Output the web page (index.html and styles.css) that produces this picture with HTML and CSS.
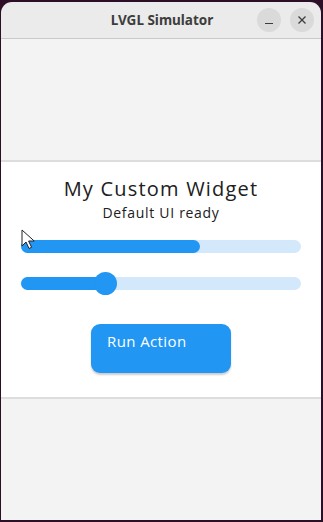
FILE: index.html
```html
<!DOCTYPE html>
<html>
<head>
<meta charset="utf-8">
<link rel="stylesheet" href="styles.css">
</head>
<body>
<div class="window">
  <div class="titlebar">
    <span class="title">LVGL Simulator</span>
    <div class="controls">
      <span class="ctl"><svg width="10" height="10" viewBox="0 0 10 10"><path d="M1 8.5h8" stroke="#3d3d3d" stroke-width="1.2"/></svg></span>
      <span class="ctl"><svg width="10" height="10" viewBox="0 0 10 10"><path d="M1.5 1.5l7 7M8.5 1.5l-7 7" stroke="#3d3d3d" stroke-width="1.3"/></svg></span>
    </div>
  </div>
  <div class="screen">
    <div class="panel">
      <div class="heading">My Custom Widget</div>
      <div class="sub">Default UI ready</div>
      <div class="bar"><div class="fill" style="width:64%"></div></div>
      <div class="slider"><div class="fill" style="width:30%"><span class="knob"></span></div></div>
      <div class="btnrow"><div class="btn">Run Action</div></div>
    </div>
    <svg class="cursor" width="16" height="22" viewBox="0 0 16 22"><path d="M1 1v16l4-4 3 6.5 2.6-1.2-3-6.3h5.6z" fill="#fff" stroke="#222" stroke-width="1" stroke-linejoin="round"/></svg>
  </div>
</div>
</body>
</html>
```
FILE: styles.css
```css
html, body { margin: 0; padding: 0; }
body {
  background: #2c0f26;
  width: 323px;
  height: 522px;
  overflow: hidden;
  font-family: "Open Sans", "Noto Sans", sans-serif;
}
.window {
  margin: 2px 0 0 1px;
  width: 320px;
  height: 518px;
  border-radius: 11px 11px 0 0;
  overflow: hidden;
  display: flex;
  flex-direction: column;
  position: relative;
}
.titlebar {
  height: 36px;
  background: #ebebeb;
  border-bottom: 1px solid #c9c9c9;
  display: flex;
  align-items: center;
  justify-content: center;
  position: relative;
  flex: none;
}
.title {
  font-family: "Noto Sans", sans-serif;
  font-weight: 700;
  font-size: 13.5px;
  color: #3d3d3d;
  margin-left: 2px;
}
.controls {
  position: absolute;
  right: 7px;
  top: 6px;
  display: flex;
  gap: 9px;
}
.ctl {
  width: 24px;
  height: 24px;
  border-radius: 50%;
  background: #dadada;
  display: flex;
  align-items: center;
  justify-content: center;
}
.screen {
  flex: 1;
  background: #f3f3f3;
  padding-top: 121px;
  position: relative;
}
.panel {
  background: #fff;
  border-top: 2px solid #dddddd;
  border-bottom: 2px solid #dddddd;
  height: 235px;
  box-sizing: content-box;
  display: flex;
  flex-direction: column;
  align-items: center;
}
.heading {
  margin-top: 14px;
  font-size: 20px;
  color: #202020;
  line-height: 26px;
  letter-spacing: 1.2px;
}
.sub {
  font-size: 14px;
  color: #202020;
  line-height: 20px;
  margin-top: 1px;
  letter-spacing: 0.7px;
}
.bar, .slider {
  width: 280px;
  height: 13px;
  border-radius: 7px;
  background: #d3e8fb;
  align-self: flex-start;
  margin-left: 20px;
}
.bar { margin-top: 17px; }
.slider { margin-top: 24px; }
.fill {
  height: 100%;
  background: #2196f3;
  border-radius: 7px;
  position: relative;
}
.knob {
  position: absolute;
  right: -12px;
  top: -5px;
  width: 23px;
  height: 23px;
  border-radius: 50%;
  background: #2196f3;
}
.btnrow { margin-top: 34px; }
.btn {
  width: 140px;
  height: 49px;
  box-sizing: border-box;
  background: #2196f3;
  border-radius: 9px;
  box-shadow: 0 2px 2px rgba(0,0,0,0.2);
  color: #fff;
  font-size: 15px;
  padding: 7px 0 0 16px;
  line-height: 20px;
  letter-spacing: 0.4px;
}
.cursor {
  position: absolute;
  left: 20px;
  top: 190px;
}
```
